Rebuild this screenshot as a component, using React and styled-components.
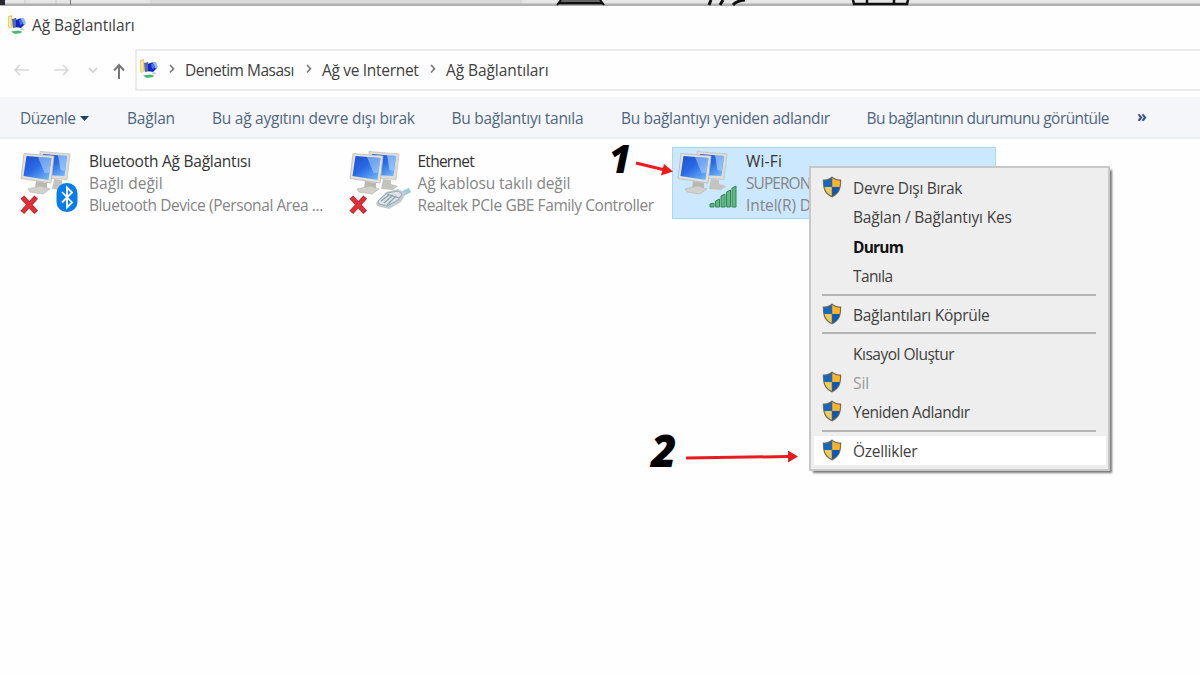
import React from "react";
import styled, { createGlobalStyle } from "styled-components";

const GlobalStyle = createGlobalStyle`
  * { box-sizing: border-box; }
  body { margin: 0; background: #fefefe; overflow: hidden; }
`;

const Window = styled.div`
  position: relative;
  display: flex;
  flex-direction: column;
  width: 1200px;
  height: 675px;
  overflow: hidden;
  background: #fefefe;
  color: #404040;
  font: 15.5px/22px "Open Sans", "Noto Sans", sans-serif;
  white-space: nowrap;
`;

const Backdrop = styled.div`
  height: 6px;
  flex: none;
  svg { display: block; }
`;

const TitleBar = styled.header`
  display: flex;
  align-items: center;
  height: 38px;
  padding: 0 0 0 7px;
  gap: 5px;
  svg { margin-bottom: 1px; }
`;

const Label = styled.span`
  letter-spacing: ${(p) => p.$track}px;
`;

const NavBar = styled.nav`
  display: flex;
  height: 53px;
  padding-top: 5px;
`;

const NavButtons = styled.div`
  display: flex;
  width: 135px;
  height: 42px;
  flex: none;
`;

const AddressBar = styled.div`
  display: flex;
  align-items: center;
  flex: 1;
  height: 42px;
  padding-left: 2px;
  border: 2px solid #ebebeb;
  border-right: 0;
  svg { margin-bottom: 2px; }
`;

const Crumb = styled.span`
  display: flex;
  align-items: center;
  width: ${(p) => p.$width}px;
  padding-left: ${(p) => p.$indent ?? 0}px;
  letter-spacing: ${(p) => p.$track}px;
  svg { flex: none; margin-right: 10px; }
`;

const Toolbar = styled.div`
  height: 42px;
  flex: none;
  display: flex;
  align-items: center;
  padding: 2px 0 0 20px;
  background: #f4f6f9;
  border-bottom: 2px solid #ebedf0;
  color: #506680;
`;

const Command = styled.span`
  display: flex;
  align-items: center;
  gap: 5px;
  width: ${(p) => p.$width}px;
  flex: none;
  letter-spacing: ${(p) => p.$track}px;
`;

const Overflow = styled.span`
  padding-bottom: 4px;
  color: #35507a;
  font-size: 16px;
  font-weight: 700;
`;

const Grid = styled.main`
  display: grid;
  grid-template-columns: repeat(3, 324px);
  column-gap: 4.5px;
  padding: 8px 0 0 15px;
`;

const Tile = styled.article`
  display: flex;
  height: 72px;
  border: 1px solid ${(p) => (p.$selected ? "#a5d8fb" : "transparent")};
  background: ${(p) => (p.$selected ? "#cce8ff" : "transparent")};
  svg { flex: none; margin-left: 3px; }
`;

const TileText = styled.div`
  padding: 2px 0 0 5px;
  display: flex;
  flex-direction: column;
`;

const TileLine = styled.span`
  line-height: 22px;
  color: ${(p) => (p.$title ? "#333" : "#858585")};
  letter-spacing: ${(p) => p.$track}px;
`;

const Menu = styled.div`
  position: absolute;
  left: 809px;
  top: 166px;
  width: 301px;
  height: 305px;
  padding: 5px 2px 0 3px;
  background: #eee;
  border: 2px solid #c8c8c8;
  box-shadow: 3px 3px 2px -1px #777;
`;

const MenuItem = styled.div`
  display: flex;
  align-items: center;
  height: 29.3px;
  padding: 1px 0 0 8px;
  background: ${(p) => (p.$hover ? "#fff" : "transparent")};
  color: ${(p) => (p.$disabled ? "#999" : p.$bold ? "#111" : "#404040")};
  font-weight: ${(p) => (p.$bold ? 700 : 400)};
  letter-spacing: ${(p) => p.$track}px;
`;

const MenuIcon = styled.span`
  width: 31px;
  padding-bottom: 2px;
  display: flex;
`;

const Separator = styled.hr`
  height: 2px;
  margin: 3.5px 10px 4px 8px;
  border: 0;
  background: #b4b4b4;
`;

const Callout = styled.span`
  position: absolute;
  left: ${(p) => p.$x}px;
  top: ${(p) => p.$y}px;
  color: #000;
  font: italic 800 ${(p) => p.$size}px/40px "Open Sans", sans-serif;
`;

const Pointer = styled.svg`
  position: absolute;
  left: ${(p) => p.$x}px;
  top: ${(p) => p.$y}px;
`;

const FolderIcon = () => (
  <svg width="20" height="20" viewBox="0 0 20 20">
    <path d="M1 1l4-1 1 12-4 2-1-2z" fill="#ecd078" />
    <path d="M2 2l2 0v10l-2 1z" fill="#f7e5a3" />
    <path d="M5 4l4-1 3 9-6 1z" fill="#4a6cb4" />
    <path d="M9 5l5-2 4 6-4 4-5-1z" fill="#1626c0" />
    <path d="M13 3l4 0 2 5-2 2z" fill="#8fbcf4" />
    <path d="M12 5l3 0 1 4-3 1z" fill="#4b70ea" />
    <path d="M4 16.500l7-1 4 1-1 1.500-6 1z" fill="#45bb72" />
    <path d="M12 14l3-1 3 1.500-3 1z" fill="#c5ccd8" />
  </svg>
);

const Arrows = () => (
  <svg width="135" height="42" viewBox="0 0 135 42" fill="none" strokeWidth="1.6">
    <path d="M29 21H15m5-5-5 5 5 5" stroke="#d7d7d7" />
    <path d="M54 21h14m-5-5 5 5-5 5" stroke="#d7d7d7" />
    <path d="M89 19l4 4 4-4" stroke="#cfcfcf" />
    <path d="M119 30V16m-5 5.500 5-5.500 5 5.500" stroke="#777" strokeWidth="2" />
  </svg>
);

const Chevron = () => (
  <svg width="6" height="10" viewBox="0 0 6 10" fill="none" stroke="#777" strokeWidth="1.6">
    <path d="M1 1l3.500 3.700L1 8.500" />
  </svg>
);

const Shield = () => (
  <svg width="20" height="22" viewBox="0 0 20 22">
    <path d="M10 .5C7 3 4 3.500 .8 3.500c0 9 1.200 14 9.200 18 8-4 9.200-9 9.200-18C16 3.500 13 3 10 .5z" fill="#6c6a58" />
    <path d="M9.700 2C7 4 5 4.500 2 4.700c0 2.300.1 4.300.5 6.300h7.200z" fill="#1268c4" />
    <path d="M10.300 2c2.700 2 4.700 2.500 7.700 2.700 0 2.300-.1 4.300-.5 6.300h-7.200z" fill="#fbb427" />
    <path d="M2.500 11h7.200v9C5.500 18 3.300 15 2.500 11z" fill="#f2cb55" />
    <path d="M17.500 11h-7.200v9c4.200-2 6.400-5 7.200-9z" fill="#0b58b8" />
  </svg>
);

const Badge = ({ kind }) => {
  if (kind === "bluetooth")
    return (
      <g>
        <rect x="36.500" y="35" width="21" height="29" rx="10" fill="#087ce8" />
        <path d="M42 44l10 10.500-5 5v-20l5 5-10 10" fill="none" stroke="#fff" strokeWidth="1.800" />
      </g>
    );
  if (kind === "ethernet")
    return (
      <g strokeLinejoin="round">
        <path d="M61 42l-10 5" stroke="#9ccde0" strokeWidth="5" />
        <path d="M27 55l10-11 12-3 8 4-5 9-12 7-12-3z" fill="#c3ccd2" />
        <path d="M29 53l9-8 11-2 4 3-4 6-11 6-8-2z" fill="#dbe3e7" stroke="#9aa8b1" />
        <path d="M32 53l8-6m-5 8 9-8m-6 10 9-9M38 46l12 4" stroke="#8ea0aa" strokeWidth="1.200" />
      </g>
    );
  return (
    <g fill="#63b77f" stroke="#318754" strokeWidth="1">
      <path d="M33 59h4v-4l-4 1zM38.500 59h4v-8l-4 2zM44 59h4v-13l-4 2zM49.500 59h4v-17l-4 2zM55 59h4V38l-4 2z" />
    </g>
  );
};

const Computers = ({ id, kind }) => (
  <svg width="65" height="70" viewBox="-1 0 65 70">
    <defs>
      <linearGradient id={id} x1="0" y1="0" x2=".8" y2="1">
        <stop offset="0" stopColor="#1a4fd2" />
        <stop offset=".5" stopColor="#2a6ae6" />
        <stop offset="1" stopColor="#6fb4f8" />
      </linearGradient>
    </defs>
    <path d="M34 31l8 1 0 4 7 2-5 4-12-1z" fill="#c4c3be" />
    <path d="M20 3.500l30 2.500-3 25.500-27-2z" fill="#dcdedb" stroke="#bfc1be" strokeWidth=".8" />
    <path d="M23 6l24 2-2.500 20-20-1z" fill={`url(#${id})`} />
    <path d="M38 7l9 1-2.500 15-4-1z" fill="#b9defc" opacity=".6" />
    <path d="M16 33l11 2 0 7-12-2z" fill="#b9b8b1" />
    <path d="M8 41l13-3 9 3-7 5-13-2z" fill="#d1d0ca" stroke="#bab9b4" strokeWidth=".7" />
    <path d="M4 5.500l30 2.500-3 27L1 30.500z" fill="#e2e1db" stroke="#b9b8b2" strokeWidth=".8" />
    <path d="M6.500 8l25 2-3 22-25-4z" fill={`url(#${id})`} />
    <path d="M18 9l13.500 1-2 15-5 0z" fill="#b9defc" opacity=".5" />
    <Badge kind={kind} />
    {kind !== "wifi" && (
      <g fill="none" strokeLinecap="square">
        <path d="M4 51l10.500 11.500M14.500 51L4 62.500" stroke="#b92a2d" strokeWidth="5" />
        <path d="M4 51l10.500 11.500M14.500 51L4 62.500" stroke="#e32f38" strokeWidth="3.200" />
      </g>
    )}
  </svg>
);

const commands = [
  ["Düzenle", 107, -0.5, true],
  ["Bağlan", 85, -0.2],
  ["Bu ağ aygıtını devre dışı bırak", 239.5, -0.25],
  ["Bu bağlantıyı tanıla", 169.5, -0.28],
  ["Bu bağlantıyı yeniden adlandır", 245.5, -0.33],
  ["Bu bağlantının durumunu görüntüle", 270.5, -0.56],
];

const connections = [
  { kind: "bluetooth", lines: ["Bluetooth Ağ Bağlantısı", "Bağlı değil", "Bluetooth Device (Personal Area ..."], tracks: [-0.24, 0.04, -0.42] },
  { kind: "ethernet", lines: ["Ethernet", "Ağ kablosu takılı değil", "Realtek PCIe GBE Family Controller"], tracks: [-0.75, -0.1, -0.42] },
  { kind: "wifi", lines: ["Wi-Fi", "SUPERONLINE", "Intel(R) Dual Band"], tracks: [0.2, -0.95, -0.1] },
];

const menu = [
  { text: "Devre Dışı Bırak", shield: true, track: -0.32 },
  { text: "Bağlan / Bağlantıyı Kes", track: -0.17 },
  { text: "Durum", bold: true, track: -0.8 },
  { text: "Tanıla", track: -0.6 },
  null,
  { text: "Bağlantıları Köprüle", shield: true, track: -0.28 },
  null,
  { text: "Kısayol Oluştur", track: -0.5 },
  { text: "Sil", shield: true, disabled: true, track: -0.1 },
  { text: "Yeniden Adlandır", shield: true, track: -0.43 },
  null,
  { text: "Özellikler", shield: true, hover: true, track: -0.25 },
];

export default function App() {
  return (
    <>
      <GlobalStyle />
      <Window>
        <Backdrop>
          <svg width="1200" height="6" viewBox="0 0 1200 6">
            <rect width="1200" height="6" fill="#e6e6e6" />
            <rect x="150" width="372" height="4" fill="#d9d9d9" />
            <path d="M25 0v4M56 0v4" stroke="#c8c8c8" />
            <rect y="3.500" width="1200" height="2.500" fill="#b0b0b0" />
            <rect width="5" height="5" fill="#2b2930" />
            <path d="M70.500 0v5" stroke="#777" />
            <path d="M560 0h41l4 5h-48z" fill="#666" />
            <path d="M561 0l-4 5M600 0l4 5M558 3h45" stroke="#111" strokeWidth="2" />
            <path d="M711 0l-2 5M723 0l-3 5M745 0q-9 1-12 5" fill="none" stroke="#111" strokeWidth="3" />
            <path d="M853 0l1 4h53l1-4M867 0v4M894 0v4" fill="none" stroke="#111" strokeWidth="2.500" />
          </svg>
        </Backdrop>
        <TitleBar>
          <FolderIcon />
          <Label $track={-0.06}>Ağ Bağlantıları</Label>
        </TitleBar>
        <NavBar>
          <NavButtons><Arrows /></NavButtons>
          <AddressBar>
            <FolderIcon />
            <Crumb $width={147} $indent={10} $track={-0.5}><Chevron />Denetim Masası</Crumb>
            <Crumb $width={124} $track={-0.31}><Chevron />Ağ ve Internet</Crumb>
            <Crumb $width={130} $track={-0.07}><Chevron />Ağ Bağlantıları</Crumb>
          </AddressBar>
        </NavBar>
        <Toolbar>
          {commands.map(([text, width, track, caret]) => (
            <Command key={text} $width={width} $track={track}>
              {text}
              {caret && <svg width="9" height="5"><path d="M0 0h9L4.500 5z" fill="#203d63" /></svg>}
            </Command>
          ))}
          <Overflow>»</Overflow>
        </Toolbar>
        <Grid>
          {connections.map(({ kind, lines, tracks }) => (
            <Tile key={kind} $selected={kind === "wifi"}>
              <Computers id={`screen-${kind}`} kind={kind} />
              <TileText>
                {lines.map((line, i) => (
                  <TileLine key={line} $title={i === 0} $track={tracks[i]}>{line}</TileLine>
                ))}
              </TileText>
            </Tile>
          ))}
        </Grid>
        <Menu>
          {menu.map((item, i) =>
            item ? (
              <MenuItem key={item.text} $bold={item.bold} $disabled={item.disabled} $hover={item.hover} $track={item.track}>
                <MenuIcon>{item.shield && <Shield />}</MenuIcon>
                {item.text}
              </MenuItem>
            ) : (
              <Separator key={i} />
            )
          )}
        </Menu>
        <Callout $x={609} $y={138} $size={38}>1</Callout>
        <Pointer $x={634} $y={156} width="42" height="24" viewBox="0 0 42 24">
          <path d="M2 7l29 7" stroke="#f0191c" strokeWidth="3" />
          <path d="M30 8l9 7.500-12 4z" fill="#f0191c" />
        </Pointer>
        <Callout $x={651} $y={430} $size={44}>2</Callout>
        <Pointer $x={684} $y={448} width="116" height="18" viewBox="0 0 116 18">
          <path d="M2 10l103-1.500" stroke="#e81c20" strokeWidth="3" />
          <path d="M104 2.500l10 6-10 6z" fill="#e81c20" />
        </Pointer>
      </Window>
    </>
  );
}
